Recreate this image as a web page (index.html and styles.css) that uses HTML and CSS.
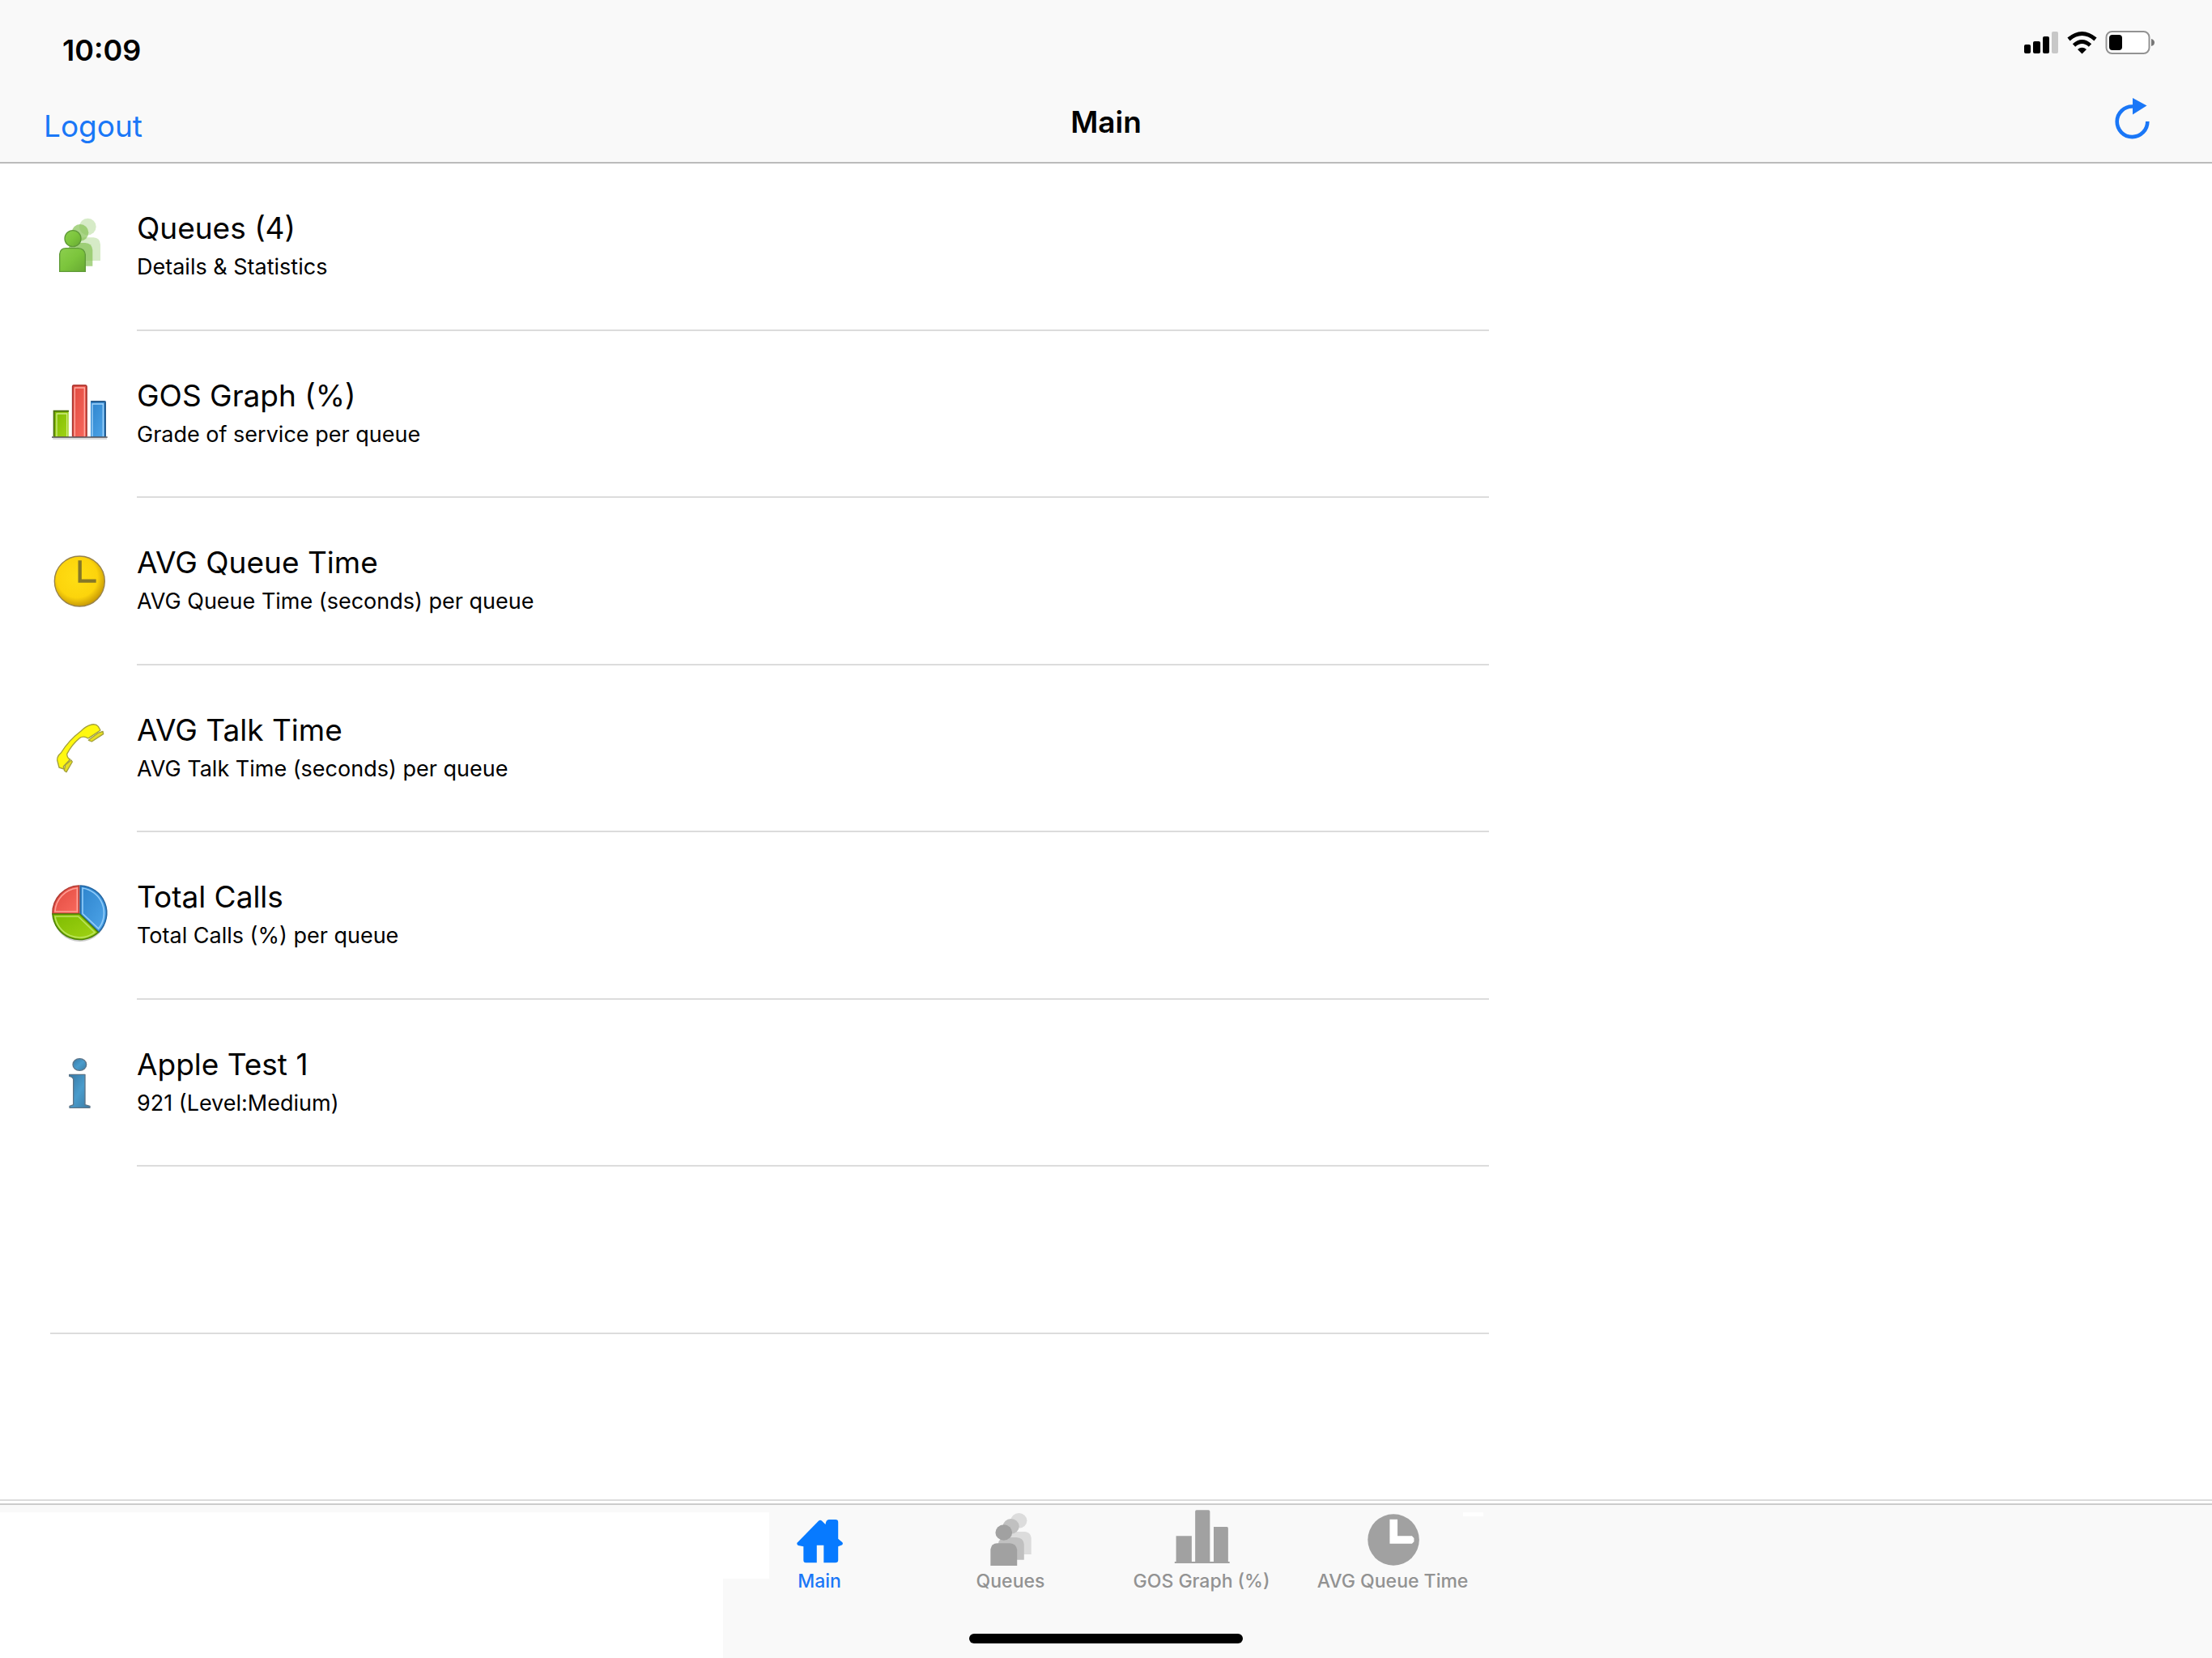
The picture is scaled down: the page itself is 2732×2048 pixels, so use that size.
FILE: index.html
```html
<!DOCTYPE html>
<html lang="en">
<head>
<meta charset="utf-8">
<meta name="viewport" content="width=device-width, initial-scale=1">
<title>Main</title>
<link rel="stylesheet" href="styles.css">
</head>
<body>
<header class="header">
  <div class="status">
    <time class="status-time">10:09</time>
    <svg class="status-icons" viewBox="0 0 164 32" aria-hidden="true">
      <rect x="0" y="17" width="8" height="11" rx="2"/>
      <rect x="11" y="13" width="9" height="15" rx="2"/>
      <rect x="23" y="7" width="8" height="21" rx="2"/>
      <rect x="34" y="1" width="8" height="27" rx="2" fill="#c8c8c8"/>
      <g fill="none" stroke="#000" stroke-width="5">
        <path d="M55 10.500Q71.500-3.500 88 10.500"/>
        <path d="M61.500 18Q71.500 9 81.500 18"/>
      </g>
      <path d="M66 23Q71.500 18.500 77 23L71.500 28.500Z"/>
      <rect x="101.500" y="1" width="53" height="27" rx="7" fill="#fff" stroke="#939393" stroke-width="2"/>
      <rect x="105" y="5" width="16" height="19" rx="4"/>
      <path d="M157 10Q161 11 161 14.500T157 19Z" fill="#777"/>
    </svg>
  </div>
  <nav class="navbar">
    <button class="logout" type="button">Logout</button>
    <h1 class="title">Main</h1>
    <button class="refresh" type="button" aria-label="Refresh">
      <svg viewBox="0 0 44 52" aria-hidden="true">
        <path d="M22 11.500A18.800 18.800 0 1 0 40.300 30" fill="none" stroke="#1a77f7" stroke-width="4.600"/>
        <path d="M22 1L39.500 10.500L22 21.500Z" fill="#1a77f7"/>
      </svg>
    </button>
  </nav>
</header>

<main class="list">
  <a class="row" href="#queues">
    <svg class="row-icon" viewBox="0 15 300 300" aria-hidden="true">
      <defs>
        <linearGradient id="green" x1="0" y1="0" x2="1" y2="1"><stop offset="0" stop-color="#8ccf4e"/><stop offset=".5" stop-color="#7cc53c"/><stop offset="1" stop-color="#67a932"/></linearGradient>
      </defs>
      <g opacity=".35"><circle cx="175" cy="90" r="31" fill="#8cc860"/><path d="M134 216V156Q136 130 162 130H196Q220 131 222 156V216Z" fill="#8cc860"/></g>
      <g opacity=".7"><circle cx="147" cy="112" r="31" fill="#86c255"/><path d="M104 236V174Q106 150 132 150H166Q190 151 193 176V236Z" fill="#86c255"/></g>
      <circle cx="120" cy="134" r="30" fill="url(#green)" stroke="#5f9a38" stroke-width="4"/>
      <path d="M71 256V192Q73 170 94 170H140Q163 171 166 194V256Z" fill="url(#green)" stroke="#5f9a38" stroke-width="4"/>
    </svg>
    <span class="row-text"><span class="row-title">Queues (4)</span><span class="row-sub">Details &amp; Statistics</span></span>
  </a>
  <a class="row" href="#gos">
    <svg class="row-icon" viewBox="0 4 300 300" aria-hidden="true">
      <defs>
        <linearGradient id="bar-g" x1="0" y1="0" x2="1" y2="1"><stop offset="0" stop-color="#7dbb00"/><stop offset="1" stop-color="#a2d416"/></linearGradient>
        <linearGradient id="bar-r" x1="0" y1="0" x2="1" y2="1"><stop offset="0" stop-color="#e0483e"/><stop offset="1" stop-color="#f96a5e"/></linearGradient>
        <linearGradient id="bar-b" x1="0" y1="0" x2="1" y2="1"><stop offset="0" stop-color="#2d83cc"/><stop offset="1" stop-color="#4fa6ea"/></linearGradient>
      </defs>
      <path d="M46 244H246" stroke="#ddd" stroke-width="6"/>
      <rect x="50" y="140" width="54" height="98" fill="url(#bar-g)"/>
      <path d="M60 236V151H98V236" fill="none" stroke="#d0ec84" stroke-width="4"/>
      <path d="M50 236V141H105" fill="none" stroke="#4f7410" stroke-width="6"/>
      <rect x="118" y="44" width="54" height="194" rx="5" fill="url(#bar-r)"/>
      <path d="M127 236V55H163V236" fill="none" stroke="#ffaca2" stroke-width="4"/>
      <path d="M119 236V50Q119 46 124 46H165Q171 46 171 52V236" fill="none" stroke="#a83832" stroke-width="5"/>
      <rect x="186" y="104" width="56" height="134" fill="url(#bar-b)"/>
      <path d="M192 236V115H232V236" fill="none" stroke="#a4d4fa" stroke-width="4"/>
      <path d="M187 106H236Q240 106 240 111V236" fill="none" stroke="#2a5f91" stroke-width="6"/>
      <path d="M42 238H248" stroke="#4c4a50" stroke-width="5"/>
    </svg>
    <span class="row-text"><span class="row-title">GOS Graph (%)</span><span class="row-sub">Grade of service per queue</span></span>
  </a>
  <a class="row" href="#queue-time">
    <svg class="row-icon" viewBox="0 -6 300 300" aria-hidden="true">
      <defs><radialGradient id="gold" cx=".45" cy=".42" r=".58"><stop offset="0" stop-color="#ffde14"/><stop offset=".7" stop-color="#fcd40c"/><stop offset="1" stop-color="#c99b06"/></radialGradient></defs>
      <circle cx="145" cy="144" r="93" fill="url(#gold)" stroke="#96814c" stroke-width="4"/>
      <path d="M146 67V143H206" fill="none" stroke="#857728" stroke-width="13"/>
    </svg>
    <span class="row-text"><span class="row-title">AVG Queue Time</span><span class="row-sub">AVG Queue Time (seconds) per queue</span></span>
  </a>
  <a class="row" href="#talk-time">
    <svg class="row-icon" viewBox="0 13 300 300" aria-hidden="true">
      <g fill="#fff810" stroke="#a3a03c" stroke-width="4" stroke-linejoin="round">
        <path d="M214 104L231 98L233 108L190 136L178 131Z" fill="#e6de20"/>
        <path d="M92 222L114 205L118 211L96 249L88 243Z" fill="#e6de20"/>
        <path d="M62 205Q61 190 76 178Q104 132 150 97Q168 78 190 73Q206 70 214 80L222 94L180 122L176 124Q160 113 145 123Q116 147 98 182Q99 199 110 202L85 228L87 238L69 232Z"/>
      </g>
    </svg>
    <span class="row-text"><span class="row-title">AVG Talk Time</span><span class="row-sub">AVG Talk Time (seconds) per queue</span></span>
  </a>
  <a class="row" href="#total-calls">
    <svg class="row-icon" viewBox="0 4 300 300" aria-hidden="true">
      <ellipse cx="146" cy="153" rx="98" ry="98" fill="#ccc"/>
      <circle cx="146" cy="143" r="101" fill="#fff"/>
      <path d="M143 147H45A101 101 0 0 1 143 43Z" fill="url(#bar-r)" stroke="#b23c34" stroke-width="5"/>
      <path d="M136 139H54A92 92 0 0 1 136 52Z" fill="none" stroke="#ff9f95" stroke-width="5"/>
      <path d="M148 43A101 101 0 0 1 216 215L148 150Z" fill="url(#bar-b)" stroke="#2567a3" stroke-width="5"/>
      <path d="M156 52A93 93 0 0 1 215 202L156 147Z" fill="none" stroke="#90ccfa" stroke-width="5"/>
      <path d="M45 148H145L214 216A101 101 0 0 1 45 148Z" fill="url(#bar-g)" stroke="#4d8208" stroke-width="5"/>
      <path d="M54 157H140L201 216A92 92 0 0 1 54 157Z" fill="none" stroke="#bae45c" stroke-width="5"/>
    </svg>
    <span class="row-text"><span class="row-title">Total Calls</span><span class="row-sub">Total Calls (%) per queue</span></span>
  </a>
  <a class="row" href="#info">
    <svg class="row-icon" viewBox="0 -6 300 300" aria-hidden="true">
      <defs><linearGradient id="blue" x1="0" y1="0" x2="1" y2="1"><stop offset="0" stop-color="#3577a4"/><stop offset=".5" stop-color="#4a9ccc"/><stop offset="1" stop-color="#3a7ca6"/></linearGradient></defs>
      <g fill="url(#blue)" stroke="#5c7488" stroke-width="4" stroke-linejoin="round">
        <ellipse cx="145" cy="75" rx="25" ry="22"/>
        <path d="M107 112H165V224L183 229V235H108V229L122 224V130Q120 121 107 118Z"/>
      </g>
    </svg>
    <span class="row-text"><span class="row-title">Apple Test 1</span><span class="row-sub">921 (Level:Medium)</span></span>
  </a>
  <div class="row row-empty"></div>
  <div class="row row-last"></div>
</main>

<footer class="tabbar">
  <nav class="tabs">
    <a class="tab tab-active" href="#main" aria-current="page">
      <svg class="tab-icon" viewBox="-3 0 224 240" preserveAspectRatio="none" aria-hidden="true">
        <path d="M32 140L106 59Q112 53 118 59L130 72Q132 54 142 54H165Q174 54 174 64V125L188 138Q192 142 188 148L174 154V205Q174 214 164 214H124V149H100V214H62Q54 214 54 205V154L36 150Q30 146 32 140Z" fill="#077aff"/>
      </svg>
      <span>Main</span>
    </a>
    <a class="tab" href="#queues">
      <svg class="tab-icon" viewBox="0 0 224 240" preserveAspectRatio="none" aria-hidden="true">
        <circle cx="141" cy="58" r="28" fill="#dcdcdc"/><path d="M100 183V124Q102 99 128 99H160Q182 100 184 124V183Z" fill="#dcdcdc"/>
        <circle cx="114" cy="79" r="28" fill="#c0c0c0"/><path d="M70 203V144Q72 120 98 120H132Q157 121 159 146V203Z" fill="#c0c0c0"/>
        <circle cx="89" cy="102" r="29" fill="#a1a1a1"/><path d="M43 225V164Q46 143 66 142H110Q132 144 135 166V225Z" fill="#a1a1a1"/>
      </svg>
      <span>Queues</span>
    </a>
    <a class="tab" href="#gos">
      <svg class="tab-icon" viewBox="-3 0 224 240" preserveAspectRatio="none" aria-hidden="true">
        <path d="M16 216V210H21V115H75V210H87V24Q87 19 92 19H133Q138 19 138 24V210H151V81H197Q201 81 201 86V210H206V216H16Z" fill="#a1a1a1"/>
      </svg>
      <span>GOS Graph (%)</span>
    </a>
    <a class="tab" href="#queue-time">
      <svg class="tab-icon" viewBox="-3 0 224 240" preserveAspectRatio="none" aria-hidden="true">
        <ellipse cx="112" cy="129" rx="89" ry="95" fill="#a1a1a1"/>
        <path d="M99 53H126V115H176L183 123V136L176 143H99Z" fill="#fff"/>
      </svg>
      <span>AVG Queue Time</span>
    </a>
  </nav>
  <div class="home-indicator"></div>
</footer>
</body>
</html>
```

FILE: styles.css
```css
* {
  box-sizing: border-box;
}

body {
  margin: 0;
  min-height: 100vh;
  display: flex;
  flex-direction: column;
  background: #fff;
  color: #000;
  font-family: Inter, "Liberation Sans", sans-serif;
}

a {
  color: inherit;
  text-decoration: none;
}

button {
  padding: 0;
  border: 0;
  background: none;
  font: inherit;
}

.header {
  background: #f9f9f9;
  border-bottom: 2px solid #bbb;
}

.status {
  display: flex;
  justify-content: space-between;
  height: 100px;
  padding: 38px 68px 0 77px;
}

.status-time {
  font-size: 36px;
  line-height: 48px;
  font-weight: 600;
}

.status-icons {
  width: 164px;
  height: 32px;
}

.navbar {
  display: grid;
  grid-template-columns: 1fr auto 1fr;
  align-items: center;
  height: 100px;
  padding: 0 76px 0 54px;
}

.logout {
  justify-self: start;
  padding-top: 12px;
  color: #1a77f7;
  font-size: 37px;
  line-height: 48px;
}

.title {
  margin: 0;
  padding: 2px 0 0 22px;
  font-size: 37px;
  line-height: 48px;
  font-weight: 600;
}

.refresh {
  justify-self: end;
  padding-bottom: 8px;
}

.refresh svg {
  display: block;
  width: 44px;
  height: 52px;
}

.list {
  flex: 1;
  display: grid;
  grid-auto-rows: 1fr;
  margin-bottom: 3px;
}

.row {
  position: relative;
  display: flex;
  align-items: center;
  gap: 19px;
  min-height: 120px;
  padding-left: 50px;
}

.row::after {
  content: "";
  position: absolute;
  left: 169px;
  right: 893px;
  bottom: 0;
  height: 2px;
  background: #dcdcdc;
}

.row-empty::after {
  left: 62px;
}

.row-last::after {
  left: 0;
  right: 0;
}

.row-icon {
  flex: none;
  width: 100px;
  height: 100px;
}

.row-text {
  display: flex;
  flex-direction: column;
  gap: 8px;
  padding-bottom: 4px;
}

.row-title {
  font-size: 37px;
  line-height: 46px;
}

.row-sub {
  font-size: 27px;
  line-height: 34px;
}

/* The unused left part of the bar stays white below its top edge. */
.tabbar {
  height: 191px;
  border-top: 2px solid #ccc;
  background:
    linear-gradient(#fff, #fff) 0 9px / 950px 82px no-repeat,
    linear-gradient(#fff, #fff) 0 91px / 893px 98px no-repeat,
    linear-gradient(#fff, #fff) 1807px 9px / 25px 5px no-repeat,
    #f9f9f9;
}

.tabs {
  display: flex;
  justify-content: center;
}

.tab {
  display: flex;
  flex-direction: column;
  align-items: center;
  width: 236px;
  color: #929292;
  font-size: 23px;
  line-height: 28px;
  font-weight: 500;
}

.tab-active {
  color: #1a77f7;
}

.tab-icon {
  width: 80px;
  height: 80px;
  overflow: visible;
}

.home-indicator {
  width: 338px;
  height: 12px;
  margin: 51px auto 0;
  border-radius: 6px;
  background: #000;
}
```
